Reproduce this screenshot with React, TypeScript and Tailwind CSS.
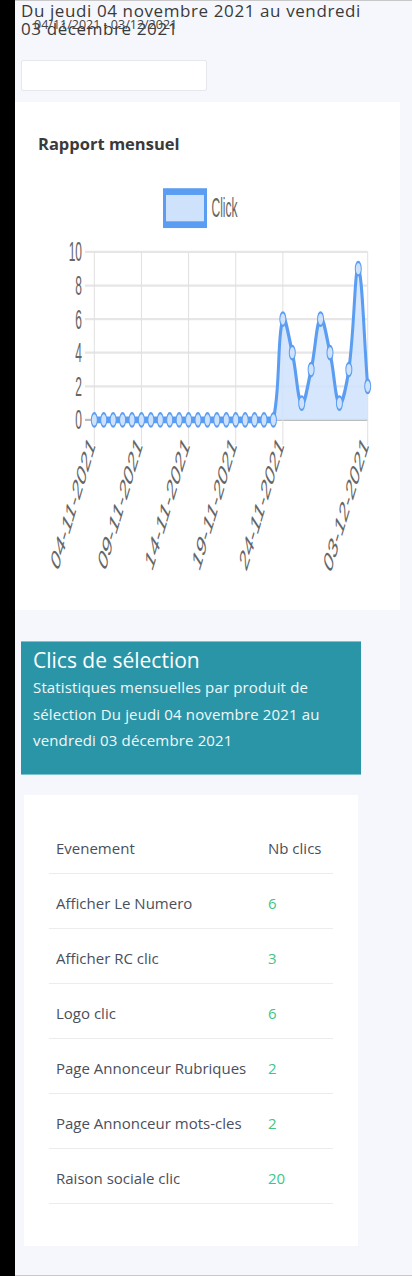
import React from "react";

// daily clicks, 04-11-2021 -> 03-12-2021
const clicks = [...Array(20).fill(0), 6, 4, 1, 3, 6, 4, 1, 3, 9, 2];

const rows = [
  { label: "Afficher Le Numero", value: 6 },
  { label: "Afficher RC clic", value: 3 },
  { label: "Logo clic", value: 6 },
  { label: "Page Annonceur Rubriques", value: 2 },
  { label: "Page Annonceur mots-cles", value: 2 },
  { label: "Raison sociale clic", value: 20 },
];

const ticks = [
  { i: 0, label: "04-11-2021" },
  { i: 5, label: "09-11-2021" },
  { i: 10, label: "14-11-2021" },
  { i: 15, label: "19-11-2021" },
  { i: 20, label: "24-11-2021" },
  { i: 29, label: "03-12-2021" },
];

// canvas is stretched vertically, so draw in "unstretched" units and scale
const SY = 2.25;
const X0 = 79.3;
const STEP = 273.4 / 29;
const Y_ZERO = 111.1;
const Y_UNIT = 7.47;
const Y_TOP = Y_ZERO - 10 * Y_UNIT;

const px = (i: number) => X0 + i * STEP;
const py = (v: number) => Y_ZERO - v * Y_UNIT;

function buildPath() {
  const pts = clicks.map((v, i) => ({ x: px(i), y: py(v) * SY }));
  const tension = 0.4;
  const ctrl = pts.map((cur, i) => {
    const prev = pts[i - 1] ?? cur;
    const next = pts[i + 1] ?? cur;
    const d01 = Math.hypot(cur.x - prev.x, cur.y - prev.y);
    const d12 = Math.hypot(next.x - cur.x, next.y - cur.y);
    const tot = d01 + d12 || 1;
    const fa = (tension * d01) / tot;
    const fb = (tension * d12) / tot;
    const cap = (y: number) => Math.min(Math.max(y, Y_TOP * SY), Y_ZERO * SY) / SY;
    return {
      px: cur.x - fa * (next.x - prev.x),
      py: cap(cur.y - fa * (next.y - prev.y)),
      nx: cur.x + fb * (next.x - prev.x),
      ny: cap(cur.y + fb * (next.y - prev.y)),
    };
  });
  let d = `M${pts[0].x},${pts[0].y / SY}`;
  for (let i = 1; i < pts.length; i++) {
    d += ` C${ctrl[i - 1].nx},${ctrl[i - 1].ny} ${ctrl[i].px},${ctrl[i].py} ${pts[i].x},${pts[i].y / SY}`;
  }
  return d;
}

const MonthlyChart = () => {
  const line = buildPath();
  const area = `${line} L${px(29)},${Y_ZERO} L${px(0)},${Y_ZERO} Z`;
  return (
    <svg width={385} height={410} className="block">
      <g transform={`scale(1,${SY})`} fontFamily="'Liberation Sans', Arial, sans-serif" fontSize={12}>
        {/* legend */}
        <rect x={149.5} y={9.6} width={41} height={14.7} fill="#cfe2fb" stroke="#5b9df2" strokeWidth={3} />
        <text x={196.5} y={20.9} fill="#666">Click</text>

        {/* horizontal grid + y labels */}
        {[0, 2, 4, 6, 8, 10].map((v) => (
          <g key={v}>
            <line
              x1={70}
              x2={352.7}
              y1={py(v)}
              y2={py(v)}
              stroke={v === 0 ? "#bdbdbd" : "#e6e6e6"}
              strokeWidth={1}
            />
            <text x={67} y={py(v) + 4.2} textAnchor="end" fill="#666">
              {v}
            </text>
          </g>
        ))}

        {/* vertical grid + x labels */}
        {ticks.map((t) => (
          <g key={t.label}>
            <line x1={px(t.i)} x2={px(t.i)} y1={Y_TOP} y2={122.2} stroke="#e0e0e0" strokeWidth={1} />
            <text
              textAnchor="end"
              fill="#666"
              fontSize={13.5}
              transform={`translate(${px(t.i) + 1.5},${122.5}) rotate(-56)`}
            >
              {t.label}
            </text>
          </g>
        ))}

        <path d={area} fill="#cfe2fb" fillOpacity={0.85} />
        <path d={line} fill="none" stroke="#5b9df2" strokeWidth={3} />
        {clicks.map((v, i) => (
          <circle key={i} cx={px(i)} cy={py(v)} r={3} fill="#cfe2fb" stroke="#5b9df2" strokeWidth={1} />
        ))}
      </g>
    </svg>
  );
};

export default function App() {
  return (
    <div className="flex w-[412px] min-h-[1276px] font-['Open_Sans',sans-serif]">
      <div className="w-[15px] shrink-0 bg-black" />
      <main className="flex-1 bg-[#f5f7fc] border-y border-[#c8c8c8] pb-[29px]">
        {/* period header */}
        <div className="relative pl-[6px] pt-[1px]">
          <h1 className="w-[350px] text-[17px] leading-[18px] tracking-[0.6px] text-[#3a3a3a]">
            Du jeudi 04 novembre 2021 au vendredi 03 décembre 2021
          </h1>
          <span className="absolute left-[19px] top-[16px] text-[12.5px] leading-[16px] text-[#444]">
            04/11/2021 - 03/12/2021
          </span>
        </div>
        <div className="ml-[6px] mt-[22px] h-[31px] w-[186px] rounded-[2px] border border-[#e6e8ee] bg-white" />

        {/* monthly report */}
        <section className="mt-[11px] w-[385px] bg-white pt-[30px] pb-[30px]">
          <h2 className="pl-[23px] text-[16.5px] leading-[24px] font-bold text-[#3a3a3a]">Rapport mensuel</h2>
          <div className="mt-[14px]">
            <MonthlyChart />
          </div>
        </section>

        {/* selection clicks */}
        <section className="mt-[31px] ml-[6px] w-[340px] border-y border-[#7cc3cf] bg-[#2b95a8] px-[12px] pt-[4px] pb-[20px] text-white">
          <h3 className="text-[21px] leading-[28px]">Clics de sélection</h3>
          <p className="text-[15px] leading-[26.7px] tracking-[0.15px] text-[#f1f8fa]">
            Statistiques mensuelles par produit de sélection Du jeudi 04 novembre 2021 au vendredi 03 décembre 2021
          </p>
        </section>

        <section className="mt-[20px] ml-[9px] w-[334px] bg-white px-[25px] pt-[28px] pb-[42px]">
          <table className="w-full border-collapse text-[15px] text-[#4a4f5c]">
            <thead>
              <tr className="h-[50px] border-b border-[#ececec]">
                <th className="w-[212px] px-[7px] text-left font-normal">Evenement</th>
                <th className="px-[7px] text-left font-normal">Nb clics</th>
              </tr>
            </thead>
            <tbody>
              {rows.map((r) => (
                <tr key={r.label} className="h-[55px] border-b border-[#ececec]">
                  <td className="px-[7px] pt-[5px]">{r.label}</td>
                  <td className="px-[7px] pt-[5px] text-[#3fc58a]">{r.value}</td>
                </tr>
              ))}
            </tbody>
          </table>
        </section>
      </main>
    </div>
  );
}
